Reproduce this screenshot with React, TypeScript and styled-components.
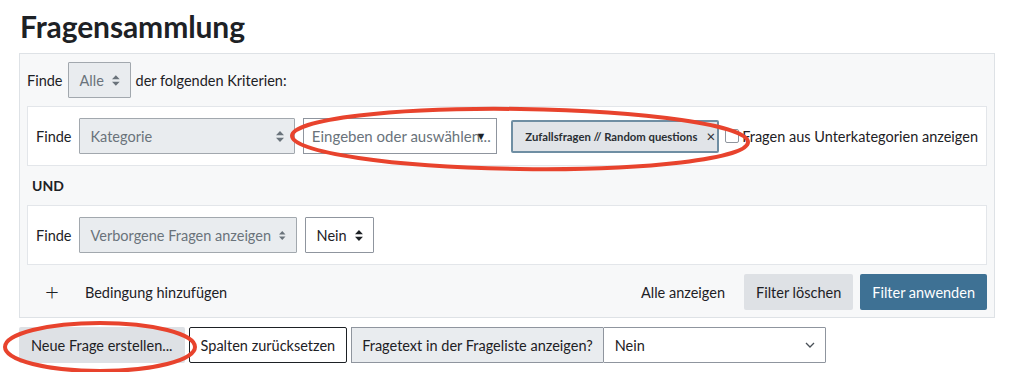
import React from "react";
import styled, { createGlobalStyle } from "styled-components";

const GlobalStyle = createGlobalStyle`
  body {
    margin: 0;
    background: #ffffff;
    font-family: Lato, "Liberation Sans", sans-serif;
    color: #1d2125;
  }
`;

const FS = 14.5;

const Page = styled.div`
  position: relative;
  width: 1024px;
  height: 372px;
  padding: 8px 19px 0;
  box-sizing: border-box;
  overflow: hidden;
`;

const Title = styled.h1`
  margin: 0 0 8px 1px;
  font-size: 30px;
  line-height: 37px;
  font-weight: 700;
  letter-spacing: -0.1px;
`;

const Panel = styled.div`
  width: 976px;
  box-sizing: border-box;
  background: #f7f8f9;
  border: 1px solid #dee2e6;
  padding: 8px 7px 7px;
`;

const Row = styled.div`
  display: flex;
  align-items: center;
  gap: 5px;
  font-size: ${FS}px;
`;

const Card = styled.div<{ $pad: number; $mt: number }>`
  margin-top: ${({ $mt }) => $mt}px;
  background: #ffffff;
  border: 1px solid #e3e6ea;
  padding: ${({ $pad }) => $pad}px 8px;
  display: flex;
  align-items: center;
  font-size: ${FS}px;
`;

const Label = styled.span<{ $ml?: number; $mr?: number }>`
  margin-left: ${({ $ml }) => $ml ?? 0}px;
  margin-right: ${({ $mr }) => $mr ?? 0}px;
  white-space: nowrap;
`;

const Select = styled.div<{ $w?: number; $disabled?: boolean; $ml?: number }>`
  display: flex;
  align-items: center;
  justify-content: space-between;
  box-sizing: border-box;
  width: ${({ $w }) => ($w ? `${$w}px` : "auto")};
  height: 36px;
  margin-left: ${({ $ml }) => $ml ?? 0}px;
  padding: 0 10px 0 11px;
  gap: 8px;
  border: 1px solid ${({ $disabled }) => ($disabled ? "#a2a8ae" : "#8f959e")};
  border-radius: 1px;
  background: ${({ $disabled }) => ($disabled ? "#e9ecef" : "#ffffff")};
  color: ${({ $disabled }) => ($disabled ? "#6a737b" : "#1d2125")};
  font-size: ${FS}px;
  white-space: nowrap;
`;

const TextInput = styled.div`
  position: relative;
  display: flex;
  align-items: center;
  box-sizing: border-box;
  width: 196px;
  height: 36px;
  margin-left: 8px;
  padding-left: 8px;
  border: 1px solid #8f959e;
  color: #6a737b;
  font-size: 15px;
  white-space: nowrap;
  overflow: hidden;
`;

const DropMark = styled.span`
  position: absolute;
  right: 10px;
  top: 10px;
  font-size: 11px;
  color: #1d2125;
`;

const Tag = styled.div`
  display: flex;
  align-items: center;
  gap: 9px;
  box-sizing: border-box;
  height: 33px;
  width: 208px;
  margin-left: 14px;
  padding: 0 6px 0 12px;
  background: #e1e4e8;
  border: 2px solid #6f8ea3;
  border-radius: 2px;
  font-size: 11.3px;
  font-weight: 700;
  color: #2a2f34;
  white-space: nowrap;
`;

const Close = styled.span`
  font-size: 15px;
  font-weight: 400;
`;

const Check = styled.span`
  width: 12px;
  height: 12px;
  margin-left: 6px;
  border: 1px solid #8f959e;
  border-radius: 2px;
  background: #fff;
`;

const Und = styled.div`
  font-weight: 700;
  font-size: 14px;
  line-height: 17px;
  margin: 11px 0 0 5px;
`;

const Footer = styled.div`
  display: flex;
  align-items: center;
  margin-top: 9px;
  font-size: ${FS}px;
`;

const Plus = styled.span`
  font-size: 24px;
  font-weight: 300;
  margin: -3px 26px 0 18px;
  line-height: 1;
`;

const Spacer = styled.div`
  flex: 1;
`;

const Button = styled.button<{
  $variant: "secondary" | "primary" | "outline" | "link";
  $ml?: number;
}>`
  box-sizing: border-box;
  height: 36px;
  margin-left: ${({ $ml }) => $ml ?? 0}px;
  padding: 0 11px;
  font-family: inherit;
  font-size: ${FS}px;
  white-space: nowrap;
  border: 1px solid
    ${({ $variant }) => ($variant === "outline" ? "#1d2125" : "transparent")};
  border-radius: 2px;
  background: ${({ $variant }) =>
    $variant === "primary"
      ? "#3e7194"
      : $variant === "secondary"
      ? "#dee1e5"
      : $variant === "outline"
      ? "#ffffff"
      : "transparent"};
  color: ${({ $variant }) => ($variant === "primary" ? "#ffffff" : "#1d2125")};
`;

const BottomRow = styled.div`
  display: flex;
  align-items: center;
  gap: 4px;
  margin-top: 9px;
`;

const GroupLabel = styled.div`
  display: flex;
  align-items: center;
  box-sizing: border-box;
  height: 36px;
  padding: 0 10px;
  background: #e9ecef;
  border: 1px solid #8f959e;
  border-right: none;
  font-size: ${FS}px;
  white-space: nowrap;
`;

const Group = styled.div`
  display: flex;
`;

const Overlay = styled.svg`
  position: absolute;
  left: 0;
  top: 0;
  pointer-events: none;
`;

const UpDown = () => (
  <svg width="8" height="11" viewBox="0 0 8 11">
    <path d="M4 0 L8 4.3 H0 Z M4 11 L8 6.7 H0 Z" fill="currentColor" />
  </svg>
);

const Chevron = () => (
  <svg width="10" height="6" viewBox="0 0 10 6">
    <path d="M1 1 L5 5 L9 1" fill="none" stroke="#495057" strokeWidth="1.3" />
  </svg>
);

export default function App() {
  return (
    <Page>
      <GlobalStyle />
      <Title>Fragensammlung</Title>
      <Panel>
        <Row>
          <Label>Finde</Label>
          <Select $w={63} $disabled>
            Alle <UpDown />
          </Select>
          <Label>der folgenden Kriterien:</Label>
        </Row>

        <Card $pad={11} $mt={8}>
          <Label $mr={7}>Finde</Label>
          <Select $w={218} $disabled>
            Kategorie <UpDown />
          </Select>
          <TextInput>
            Eingeben oder auswählen...
            <DropMark>▼</DropMark>
          </TextInput>
          <Tag>
            Zufallsfragen // Random questions <Close>×</Close>
          </Tag>
          <Check />
          <Label $ml={3}>Fragen aus Unterkategorien anzeigen</Label>
        </Card>

        <Und>UND</Und>

        <Card $pad={11} $mt={11}>
          <Label $mr={7}>Finde</Label>
          <Select $w={218} $disabled>
            Verborgene Fragen anzeigen <UpDown />
          </Select>
          <Select $w={69} $ml={8}>
            Nein <UpDown />
          </Select>
        </Card>

        <Footer>
          <Plus>+</Plus>
          <Label>Bedingung hinzufügen</Label>
          <Spacer />
          <Button $variant="link">Alle anzeigen</Button>
          <Button $variant="secondary" $ml={7}>
            Filter löschen
          </Button>
          <Button $variant="primary" $ml={7}>
            Filter anwenden
          </Button>
        </Footer>
      </Panel>

      <BottomRow>
        <Button $variant="secondary">Neue Frage erstellen...</Button>
        <Button $variant="outline">Spalten zurücksetzen</Button>
        <Group>
          <GroupLabel>Fragetext in der Frageliste anzeigen?</GroupLabel>
          <Select $w={223}>
            Nein <Chevron />
          </Select>
        </Group>
      </BottomRow>

      <Overlay width="1024" height="372" viewBox="0 0 1024 372">
        <ellipse
          cx="520"
          cy="139"
          rx="228"
          ry="30"
          fill="none"
          stroke="#e8432d"
          strokeWidth="4"
          transform="rotate(0.8 520 139)"
        />
        <ellipse cx="100" cy="347" rx="95" ry="24" fill="none" stroke="#e8432d" strokeWidth="4" />
      </Overlay>
    </Page>
  );
}
